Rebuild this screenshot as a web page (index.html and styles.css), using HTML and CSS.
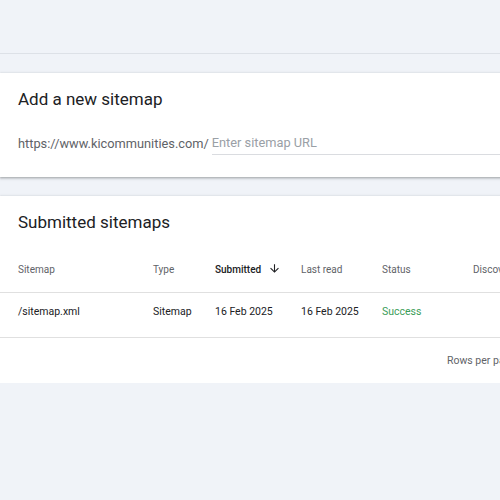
FILE: index.html
```html
<!DOCTYPE html>
<html>
<head>
<meta charset="utf-8">
<link rel="stylesheet" href="styles.css">
</head>
<body>
<div class="topbar"></div>
<main class="content">
  <section class="card add-card">
    <h2 class="card-title">Add a new sitemap</h2>
    <div class="url-row">
      <span class="prefix">https://www.kicommunities.com/</span>
      <div class="input-wrap"><span class="placeholder">Enter sitemap URL</span></div>
    </div>
  </section>
  <section class="card list-card">
    <h2 class="card-title">Submitted sitemaps</h2>
    <div class="table">
      <div class="row head">
        <div class="c c1">Sitemap</div>
        <div class="c c2">Type</div>
        <div class="c c3 sorted">Submitted
          <svg class="arrow" viewBox="0 0 24 24" width="13" height="13"><path d="M20 12l-1.41-1.41L13 16.17V4h-2v12.17l-5.58-5.59L4 12l8 8 8-8z" fill="#202124"/></svg>
        </div>
        <div class="c c4">Last read</div>
        <div class="c c5">Status</div>
        <div class="c c6">Discovered pages</div>
      </div>
      <div class="row body">
        <div class="c c1">/sitemap.xml</div>
        <div class="c c2">Sitemap</div>
        <div class="c c3">16 Feb 2025</div>
        <div class="c c4">16 Feb 2025</div>
        <div class="c c5 ok">Success</div>
        <div class="c c6"></div>
      </div>
      <div class="footer">
        <span class="rows-label">Rows per page</span>
      </div>
    </div>
  </section>
</main>
</body>
</html>
```
FILE: styles.css
```css
html, body {
  margin: 0;
  padding: 0;
  background: #f0f3f8;
  font-family: Roboto, "Liberation Sans", sans-serif;
  overflow: hidden;
}
.topbar {
  height: 53px;
  border-bottom: 1px solid #dde1e7;
}
.content {
  width: 560px;
  padding-top: 19px;
  display: flex;
  flex-direction: column;
  gap: 19px;
}
.card {
  background: #fff;
  box-shadow: 0 1px 2px rgba(60,64,67,0.35), 0 1px 3px 1px rgba(60,64,67,0.12);
}
.card-title {
  margin: 0;
  font-weight: 400;
  font-size: 17px;
  line-height: 20px;
  color: #202124;
}
.add-card {
  height: 104px;
  box-sizing: border-box;
  padding: 16px 0 0 18px;
}
.url-row {
  display: flex;
  align-items: flex-end;
  margin-top: 23px;
  font-size: 12.8px;
}
.prefix {
  color: #5f6368;
  line-height: 22px;
  margin-right: 3px;
}
.input-wrap {
  flex: 1;
  border-bottom: 1px solid #dadce0;
  line-height: 22px;
}
.placeholder {
  color: #9aa0a6;
}
.list-card {
  padding-top: 16px;
  height: 187px;
  box-sizing: border-box;
}
.list-card .card-title {
  padding-left: 18px;
}
.table {
  margin-top: 14px;
}
.row {
  display: flex;
  align-items: center;
  border-bottom: 1px solid #e0e0e0;
}
.row.head {
  height: 46px;
  font-size: 10px;
  color: #5f6368;
}
.row.body {
  height: 45px;
  font-size: 10.5px;
  color: #202124;
  padding-bottom: 8px;
  box-sizing: border-box;
}
.c { flex: none; white-space: nowrap; display: flex; align-items: center; }
.c1 { width: 135px; padding-left: 18px; }
.c2 { width: 62px; }
.c3 { width: 86px; }
.c4 { width: 81px; }
.c5 { width: 91px; }
.sorted { color: #202124; font-weight: 500; }
.arrow { margin-left: 7px; margin-top: -2px; }
.ok { color: #3a9d59; }
.footer {
  height: 45px;
  display: flex;
  align-items: center;
  padding-left: 447px;
  font-size: 10.5px;
  color: #5f6368;
  white-space: nowrap;
}
```
